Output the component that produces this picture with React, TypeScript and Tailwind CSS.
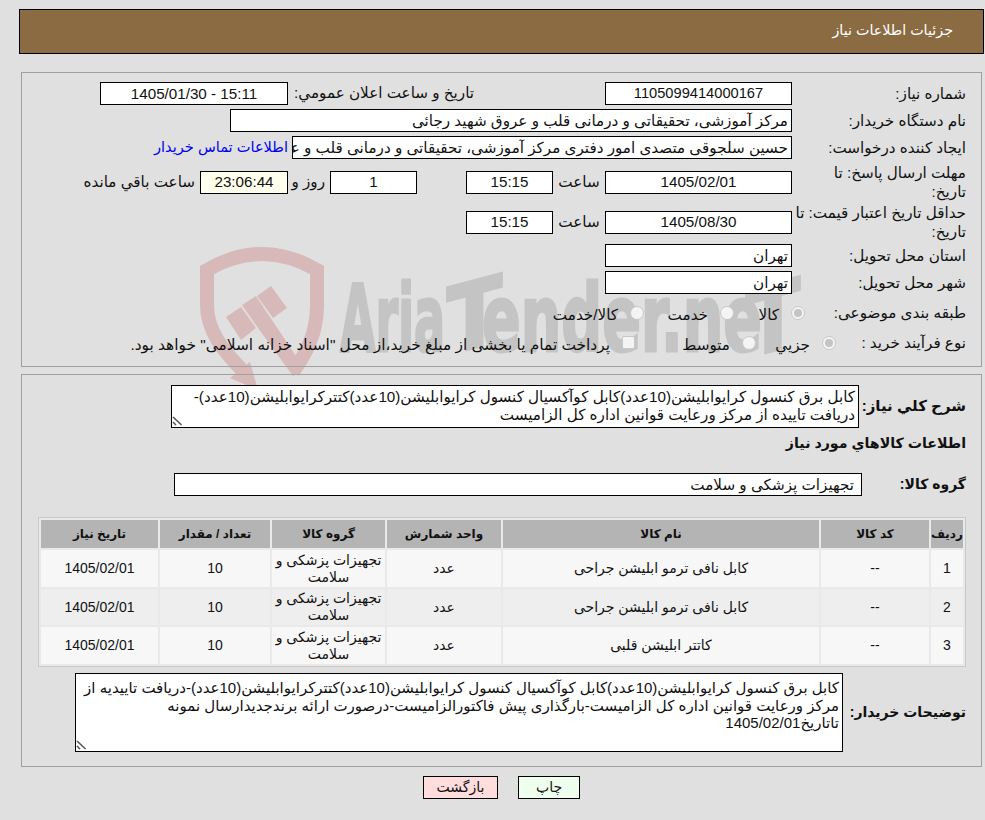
import React from "react";

function Box({ className = "", children }: { className?: string; children?: React.ReactNode }) {
  return (
    <div className={`h-[23px] shrink-0 bg-white border border-black flex items-center justify-center overflow-hidden whitespace-nowrap leading-none ${className}`}>
      {children}
    </div>
  );
}

function Radio({ checked = false }: { checked?: boolean }) {
  return (
    <span className="shrink-0 w-[14px] h-[14px] rounded-full border border-[#c8c8c8] bg-[#f4f4f4] flex items-center justify-center">
      {checked && <span className="block w-[8px] h-[8px] rounded-full bg-[#c4c4c4]" />}
    </span>
  );
}

function Grip() {
  return (
    <svg className="absolute left-0 bottom-0" width="12" height="12" viewBox="0 0 12 12" fill="none" stroke="#555555" strokeWidth="1.5">
      <path d="M1 2 L9.5 10" />
      <path d="M1 7 L4 10" />
    </svg>
  );
}

function Label({ className = "", children }: { className?: string; children?: React.ReactNode }) {
  return <div className={`w-[189px] shrink-0 pr-[15px] leading-[19px] ${className}`}>{children}</div>;
}

function Watermark() {
  const t = "[font-family:'DejaVu_Sans',sans-serif]";
  const common = {
    fontSize: 92,
    fontWeight: 700,
    lengthAdjust: "spacingAndGlyphs" as const,
    fill: "#c4c4c4",
    stroke: "#c4c4c4",
    strokeWidth: 3,
    direction: "ltr" as const,
    className: t,
  };
  return (
    <svg className="absolute left-0 top-0" width="985" height="820" viewBox="0 0 985 820" fill="none">
      <path d="M244 372 C222 350 207 330 207 305 L207 270 Q262 238 317 270 L317 305 C317 335 305 355 293 372" stroke="#d8b9b9" strokeWidth="14" />
      <path d="M250 362 L258 390 L230 378 Z" fill="#d8b9b9" />
      <path d="M226 317 L241 307 L256 328 L241 340 Z" fill="#d8b9b9" />
      <path d="M257 296 L271 286 L287 308 L273 318 Z" fill="#d8b9b9" />
      <path d="M242 305 L256 296 L304 368 L293 376 L258 328 Z" fill="#d8b9b9" />
      <text x="340" y="351" textLength="105" {...common}>Aria</text>
      <text transform="translate(447 355) skewY(-15)" textLength="55" {...common}>T</text>
      <text x="482" y="351" textLength="280" {...common}>ender.ne</text>
      <text transform="translate(746 358) skewY(-15)" textLength="54" {...common}>T</text>
    </svg>
  );
}

const rows = [
  ["1", "--", "کابل نافی ترمو ابلیشن جراحی", "h-[37px] bg-[#f7f7f7]"],
  ["2", "--", "کابل نافی ترمو ابلیشن جراحی", "h-[36px] bg-[#eeeeee]"],
  ["3", "--", "کاتتر ابلیشن قلبی", "h-[37px] bg-[#f7f7f7]"],
];

export default function App() {
  return (
    <div dir="rtl" className="[font-family:'Liberation_Sans','DejaVu_Sans',sans-serif] relative w-[985px] h-[820px] bg-[#e0e0e0] text-[15.2px] text-[#111111] overflow-hidden pl-[19px] pr-[1px] pt-[9px]">
      <Watermark />
      <div className="relative">
        <div className="h-[45px] bg-[#8b6b42] border border-black flex items-center pr-[30px] pb-[2px] text-white text-[14.3px]">جزئیات اطلاعات نیاز</div>

        <div className="mt-[18px] mx-[2px] h-[295px] border border-[#a0a0a0] pt-[9px]">
          <div className="flex items-center h-[23px]">
            <Label>شماره نیاز:</Label>
            <Box className="w-[187px] text-[14.67px]">1105099414000167</Box>
            <div className="w-[317px] pr-[131px] shrink-0 whitespace-nowrap">تاريخ و ساعت اعلان عمومي:</div>
            <Box className="w-[188px]">15:11 - 1405/01/30</Box>
          </div>
          <div className="flex items-center h-[23px] mt-[4px]">
            <Label>نام دستگاه خریدار:</Label>
            <Box className="w-[562px] !justify-start pr-[3px]">مرکز آموزشی، تحقیقاتی و درمانی قلب و عروق شهید رجائی</Box>
          </div>
          <div className="flex items-center h-[23px] mt-[4px]">
            <Label>ایجاد کننده درخواست:</Label>
            <Box className="w-[500px] !justify-start pr-[3px]">حسین سلجوقی متصدی امور دفتری مرکز آموزشی، تحقیقاتی و درمانی قلب و عروق شهید رجائی</Box>
            <span className="mr-[4px] text-[#0000ee] text-[14.6px] whitespace-nowrap">اطلاعات تماس خریدار</span>
          </div>
          <div className="flex items-center h-[38px] mt-[4px]">
            <Label>مهلت ارسال پاسخ: تا<br />تاریخ:</Label>
            <Box className="w-[187px]">1405/02/01</Box>
            <span className="w-[52px] text-center shrink-0">ساعت</span>
            <Box className="w-[87px]">15:15</Box>
            <div className="w-[49px] shrink-0" />
            <Box className="w-[87px]">1</Box>
            <span className="w-[42px] pr-[5px] shrink-0 whitespace-nowrap">روز و</span>
            <Box className="w-[88px] !bg-[#ffffee]">23:06:44</Box>
            <span className="mr-[5px] whitespace-nowrap">ساعت باقي مانده</span>
          </div>
          <div className="flex items-center h-[38px] mt-[2px]">
            <Label>حداقل تاریخ اعتبار قیمت: تا<br />تاریخ:</Label>
            <Box className="w-[187px]">1405/08/30</Box>
            <span className="w-[52px] text-center shrink-0">ساعت</span>
            <Box className="w-[87px]">15:15</Box>
          </div>
          <div className="flex items-center h-[23px] mt-[3px]">
            <Label>استان محل تحویل:</Label>
            <Box className="w-[187px] !justify-start pr-[3px]">تهران</Box>
          </div>
          <div className="flex items-center h-[23px] mt-[4px]">
            <Label>شهر محل تحویل:</Label>
            <Box className="w-[187px] !justify-start pr-[3px]">تهران</Box>
          </div>
          <div className="flex items-center h-[23px] mt-[7px]">
            <Label className="!w-[176px]">طبقه بندی موضوعی:</Label>
            <Radio checked />
            <span className="w-[57px] pr-[12px] pt-[5px] shrink-0">کالا</span>
            <Radio />
            <span className="w-[76px] pr-[12px] pt-[5px] shrink-0">خدمت</span>
            <Radio />
            <span className="pr-[12px] pt-[5px] whitespace-nowrap">کالا/خدمت</span>
          </div>
          <div className="flex items-center h-[23px] mt-[7px]">
            <Label className="!w-[145px]">نوع فرآیند خرید :</Label>
            <Radio checked />
            <span className="w-[66px] pr-[12px] pt-[5px] shrink-0">جزيي</span>
            <Radio />
            <span className="w-[107px] pr-[12px] pt-[5px] shrink-0">متوسط</span>
            <span className="shrink-0 w-[13px] h-[13px] border border-[#c8c8c8] bg-[#f4f4f4] rounded-[2px]" />
            <span className="pr-[12px] pt-[5px] whitespace-nowrap text-[15.4px]">پرداخت تمام یا بخشی از مبلغ خرید،از محل "اسناد خزانه اسلامی" خواهد بود.</span>
          </div>
        </div>

        <div className="mt-[7px] mx-[2px] h-[393px] border border-[#a0a0a0] pt-[10px]">
          <div className="flex items-center">
            <div className="w-[122px] shrink-0 pr-[15px] font-bold text-[15px] whitespace-nowrap">شرح کلي نیاز:</div>
            <div className="relative w-[688px] h-[43px] bg-white border border-black px-[3px] leading-[18px] pt-[2px]">
              کابل برق کنسول کرایوابلیشن(10عدد)کابل کوآکسیال کنسول کرایوابلیشن(10عدد)کتترکرایوابلیشن(10عدد)-دریافت تاییده از مرکز ورعایت قوانین اداره کل الزامیست
              <Grip />
            </div>
          </div>
          <div className="font-bold text-[14.2px] pr-[15px] mt-[6px] leading-[19px]">اطلاعات کالاهاي مورد نیاز</div>
          <div className="flex items-center mt-[20px]">
            <div className="w-[119px] shrink-0 pr-[15px] font-bold text-[14px]">گروه کالا:</div>
            <Box className="w-[688px] !justify-start pr-[7px]">تجهیزات پزشکی و سلامت</Box>
          </div>
          <table className="mt-[21px] mr-[15px] w-[928px] border-separate border-spacing-[2px] border border-[#c8c8c8] bg-[#e9e9e9] text-center table-fixed text-[14px]">
            <thead>
              <tr className="bg-[#b4b4b4] h-[28px] text-[12px]">
                <th className="w-[32px] p-0 font-bold">رديف</th>
                <th className="w-[108px] p-0 font-bold">کد کالا</th>
                <th className="w-[316px] p-0 font-bold">نام کالا</th>
                <th className="w-[114px] p-0 font-bold">واحد شمارش</th>
                <th className="w-[113px] p-0 font-bold">گروه کالا</th>
                <th className="w-[110px] p-0 font-bold">تعداد / مقدار</th>
                <th className="p-0 font-bold">تاریخ نیاز</th>
              </tr>
            </thead>
            <tbody className="leading-[17px]">
              {rows.map((r) => (
                <tr key={r[0]} className={r[3]}>
                  <td className="p-0">{r[0]}</td>
                  <td className="p-0">{r[1]}</td>
                  <td className="p-0">{r[2]}</td>
                  <td className="p-0">عدد</td>
                  <td className="p-0">تجهیزات پزشکی و سلامت</td>
                  <td className="p-0">10</td>
                  <td className="p-0">1405/02/01</td>
                </tr>
              ))}
            </tbody>
          </table>
          <div className="flex items-center mt-[6px]">
            <div className="w-[138px] shrink-0 pr-[15px] font-bold text-[14px] whitespace-nowrap">توضیحات خریدار:</div>
            <div className="relative w-[768px] h-[79px] bg-white border border-black px-[3px] leading-[17.5px] pt-[5px] text-[15px]">
              کابل برق کنسول کرایوابلیشن(10عدد)کابل کوآکسیال کنسول کرایوابلیشن(10عدد)کتترکرایوابلیشن(10عدد)-دریافت تاییدیه از مرکز ورعایت قوانین اداره کل الزامیست-بارگذاری پیش فاکتورالزامیست-درصورت ارائه برندجدیدارسال نمونه تاتاریخ1405/02/01
              <Grip />
            </div>
          </div>
        </div>

        <div className="flex justify-center gap-[20px] mt-[9px] text-[14px]">
          <div className="w-[62px] h-[23px] bg-[#eeffee] border border-black flex items-center justify-center">چاپ</div>
          <div className="w-[75px] h-[23px] bg-[#ffdddd] border border-black flex items-center justify-center">بازگشت</div>
        </div>
      </div>
    </div>
  );
}
